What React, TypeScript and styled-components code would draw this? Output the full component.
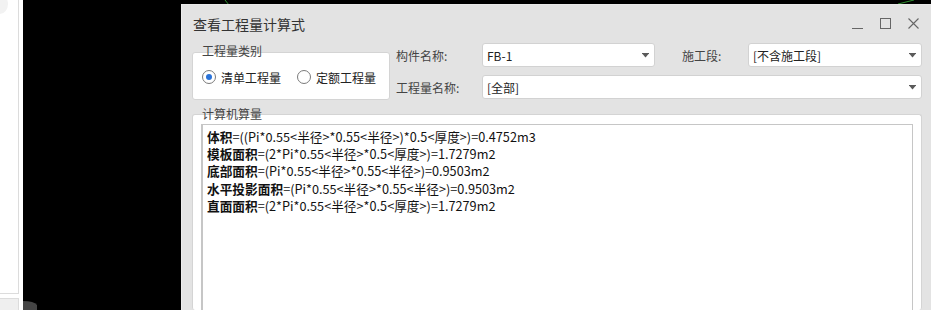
import React from "react";
import styled, { createGlobalStyle } from "styled-components";

const Global = createGlobalStyle`
  html, body { margin: 0; padding: 0; background: #000; }
  body { font-family: "Noto Sans CJK SC", "Noto Sans", sans-serif; }
  * { box-sizing: border-box; }
`;

const Screen = styled.div`
  display: flex;
  width: 931px;
  height: 310px;
  overflow: hidden;
`;

const LeftPane = styled.div`
  width: 23px;
  flex: none;
  background: #fff;
  display: flex;
  flex-direction: column;
  position: relative;
`;

const LeftCard = styled.div`
  width: 19px;
  flex: 1;
  border-right: 1px solid #dcdcdc;
  border-bottom: 1px solid #dcdcdc;
`;

const LeftFooter = styled.div`
  width: 19px;
  height: 12px;
  margin-top: 4px;
  background: #efefef;
  border-top: 1px solid #dcdcdc;
  border-right: 1px solid #dcdcdc;
`;

const CornerBlob = styled.div`
  position: absolute;
  left: -8px;
  top: -6px;
  width: 16px;
  height: 20px;
  border-radius: 50%;
  background: #f2f2f2;
`;

const Canvas = styled.div`
  flex: 1;
  position: relative;
  background: #000;
  display: flex;
  padding: 4px 0 0 158px;
`;

const CanvasLines = styled.svg`
  position: absolute;
  left: 0;
  top: 0;
  width: 908px;
  height: 310px;
  pointer-events: none;
`;

const Dialog = styled.div`
  position: relative;
  flex: 1;
  background: #e3e3e3;
  border-left: 1px solid #ececec;
  border-top: 1px solid #e9e9e9;
  display: flex;
  flex-direction: column;
  color: #333;
`;

const TitleBar = styled.div`
  height: 35px;
  display: flex;
  align-items: center;
  padding: 0 0 0 11px;
  flex: none;
`;

const Title = styled.div`
  flex: 1;
  font-size: 14px;
  color: #333;
  padding-top: 3px;
`;

const WinButtons = styled.div`
  display: flex;
  align-items: center;
  padding-right: 4px;
  padding-top: 2px;
`;

const WinButton = styled.div`
  width: 28px;
  height: 20px;
  display: flex;
  align-items: center;
  justify-content: center;
`;

const Body = styled.div`
  flex: 1;
  display: flex;
  flex-direction: column;
  padding: 3px 9px 0 10px;
`;

const TopSection = styled.div`
  display: flex;
  align-items: flex-start;
`;

const GroupBox = styled.div<{ $w?: number }>`
  position: relative;
  background: #fff;
  border: 1px solid #d4d4d4;
  border-radius: 3px;
  ${(p) => (p.$w ? `width: ${p.$w}px;` : "")}
`;

const Legend = styled.span`
  position: absolute;
  left: 9px;
  top: -10px;
  font-size: 12px;
  line-height: 16px;
  color: #444;
`;

const TypeBox = styled(GroupBox)`
  margin-top: 9px;
  height: 48px;
  display: flex;
  align-items: center;
  padding: 2px 0 0 9px;
  gap: 16px;
`;

const RadioItem = styled.label`
  display: flex;
  align-items: center;
  gap: 5px;
  font-size: 12px;
  color: #222;
`;

const RadioCircle = styled.span<{ $on?: boolean }>`
  width: 14px;
  height: 14px;
  border-radius: 50%;
  border: 1px solid #7a7a7a;
  background: #fff;
  display: flex;
  align-items: center;
  justify-content: center;
  &::after {
    content: "";
    width: 6px;
    height: 6px;
    border-radius: 50%;
    background: ${(p) => (p.$on ? "#2a73d9" : "transparent")};
  }
`;

const Form = styled.div`
  flex: 1;
  margin-left: 6px;
  display: flex;
  flex-direction: column;
  gap: 8px;
`;

const FormRow = styled.div`
  display: flex;
  align-items: center;
  height: 24px;
`;

const FieldLabel = styled.div<{ $w: number; $ml?: number }>`
  width: ${(p) => p.$w}px;
  margin-left: ${(p) => p.$ml ?? 0}px;
  font-size: 12px;
  color: #444;
  flex: none;
`;

const Select = styled.div<{ $w?: number }>`
  height: 24px;
  ${(p) => (p.$w ? `width: ${p.$w}px; flex: none;` : "flex: 1;")}
  background: #fff;
  border: 1px solid #d2d2d2;
  border-radius: 3px;
  display: flex;
  align-items: center;
  padding: 0 5px 0 4px;
  font-size: 12px;
  color: #222;
`;

const SelectText = styled.span`
  flex: 1;
`;

const CalcBox = styled(GroupBox)`
  margin-top: 14px;
  flex: 1;
  padding: 9px 8px 0 8px;
  border-bottom: none;
  display: flex;
`;

const CalcLegend = styled(Legend)`
  top: -9px;
`;

const Output = styled.div`
  flex: 1;
  border-top: 1px solid #c6c6c6;
  border-left: 2px solid #c6c6c6;
  border-right: 1px solid #c6c6c6;
  padding: 3px 0 0 4px;
  font-size: 12.7px;
  line-height: 17.2px;
  color: #111;
`;

const Line = styled.div`
  white-space: nowrap;
`;

const Key = styled.b`
  font-weight: 700;
`;

const Arrow = () => (
  <svg width="7" height="5" viewBox="0 0 7 5">
    <rect x="0" y="0" width="7" height="1" fill="#5a5a5a" />
    <path d="M0.5 1 L6.5 1 L3.5 4.5 Z" fill="#5a5a5a" />
  </svg>
);

const lines: [string, string][] = [
  ["体积", "=((Pi*0.55<半径>*0.55<半径>)*0.5<厚度>)=0.4752m3"],
  ["模板面积", "=(2*Pi*0.55<半径>*0.5<厚度>)=1.7279m2"],
  ["底部面积", "=(Pi*0.55<半径>*0.55<半径>)=0.9503m2"],
  ["水平投影面积", "=(Pi*0.55<半径>*0.55<半径>)=0.9503m2"],
  ["直面面积", "=(2*Pi*0.55<半径>*0.5<厚度>)=1.7279m2"],
];

export default function App() {
  return (
    <>
      <Global />
      <Screen>
        <LeftPane>
          <CornerBlob />
          <LeftCard />
          <LeftFooter />
        </LeftPane>
        <Canvas>
          <CanvasLines viewBox="0 0 908 310">
            <line x1="202" y1="0" x2="206" y2="5" stroke="#2f8f2f" strokeWidth="1" />
            <line x1="875" y1="4" x2="891" y2="0" stroke="#2f8f2f" strokeWidth="1" />
            <path d="M0 301 Q11 301 14 305 L14 310 L0 310 Z" fill="#454545" />
          </CanvasLines>
          <Dialog>
            <TitleBar>
              <Title>查看工程量计算式</Title>
              <WinButtons>
                <WinButton>
                  <svg width="11" height="11" viewBox="0 0 11 11">
                    <line x1="0" y1="10.5" x2="11" y2="10.5" stroke="#666" strokeWidth="1" />
                  </svg>
                </WinButton>
                <WinButton>
                  <svg width="11" height="11" viewBox="0 0 11 11">
                    <rect x="0.5" y="0.5" width="10" height="10" fill="none" stroke="#666" strokeWidth="1" />
                  </svg>
                </WinButton>
                <WinButton>
                  <svg width="11" height="11" viewBox="0 0 11 11">
                    <path d="M0.5 0.5 L10.5 10.5 M10.5 0.5 L0.5 10.5" stroke="#666" strokeWidth="1.1" />
                  </svg>
                </WinButton>
              </WinButtons>
            </TitleBar>
            <Body>
              <TopSection>
                <TypeBox $w={198}>
                  <Legend>工程量类别</Legend>
                  <RadioItem>
                    <RadioCircle $on />
                    清单工程量
                  </RadioItem>
                  <RadioItem>
                    <RadioCircle />
                    定额工程量
                  </RadioItem>
                </TypeBox>
                <Form>
                  <FormRow>
                    <FieldLabel $w={86}>构件名称:</FieldLabel>
                    <Select $w={173}>
                      <SelectText>FB-1</SelectText>
                      <Arrow />
                    </Select>
                    <FieldLabel $w={66} $ml={27}>施工段:</FieldLabel>
                    <Select>
                      <SelectText>[不含施工段]</SelectText>
                      <Arrow />
                    </Select>
                  </FormRow>
                  <FormRow>
                    <FieldLabel $w={86}>工程量名称:</FieldLabel>
                    <Select>
                      <SelectText>[全部]</SelectText>
                      <Arrow />
                    </Select>
                  </FormRow>
                </Form>
              </TopSection>
              <CalcBox>
                <CalcLegend>计算机算量</CalcLegend>
                <Output>
                  {lines.map(([k, v]) => (
                    <Line key={k}>
                      <Key>{k}</Key>
                      {v}
                    </Line>
                  ))}
                </Output>
              </CalcBox>
            </Body>
          </Dialog>
        </Canvas>
      </Screen>
    </>
  );
}
